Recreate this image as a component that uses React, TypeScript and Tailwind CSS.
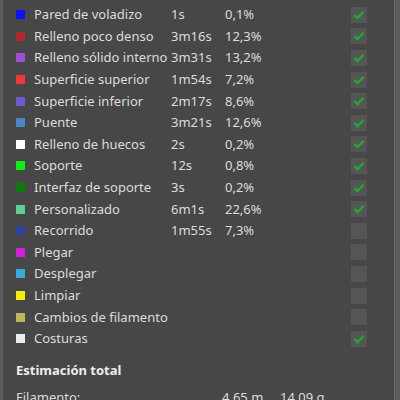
const rows: [string, string, string, string, boolean][] = [
  ['#1010ff', 'Pared de voladizo', '1s', '0,1%', true],
  ['#b02a2a', 'Relleno poco denso', '3m16s', '12,3%', true],
  ['#9b4fd6', 'Relleno sólido interno', '3m31s', '13,2%', true],
  ['#f03a3a', 'Superficie superior', '1m54s', '7,2%', true],
  ['#6c5ad0', 'Superficie inferior', '2m17s', '8,6%', true],
  ['#4a86c8', 'Puente', '3m21s', '12,6%', true],
  ['#ffffff', 'Relleno de huecos', '2s', '0,2%', true],
  ['#10f010', 'Soporte', '12s', '0,8%', true],
  ['#0a7a0a', 'Interfaz de soporte', '3s', '0,2%', true],
  ['#5fcf95', 'Personalizado', '6m1s', '22,6%', true],
  ['#2e40a0', 'Recorrido', '1m55s', '7,3%', false],
  ['#d020d8', 'Plegar', '', '', false],
  ['#3aa8d8', 'Desplegar', '', '', false],
  ['#f4f000', 'Limpiar', '', '', false],
  ['#c0b858', 'Cambios de filamento', '', '', false],
  ['#ececec', 'Costuras', '', '', true],
]

function Check({ on }: { on: boolean }) {
  return (
    <div className="w-[16px] h-[16px] bg-[#555555] flex items-center justify-center">
      {on && (
        <svg width="12" height="10" viewBox="0 0 12 10">
          <path d="M1.5 5.2 L4.6 8 L10.5 1.8" fill="none" stroke="#1fa83a" strokeWidth="2.4" />
        </svg>
      )}
    </div>
  )
}

export default function App() {
  return (
    <div
      className="w-[400px] h-[400px] overflow-hidden bg-[#5c5c5c] flex text-[13px] text-[#dcdcdc]"
      style={{ fontFamily: '"Noto Sans", "Open Sans", sans-serif' }}
    >
      <div className="ml-[3px] w-[392px] h-full bg-[#474747] border-r border-[#6a6a6a] flex flex-col">
        <div className="pt-[4px] flex flex-col">
          {rows.map(([c, label, t, p, on]) => (
            <div key={label} className="h-[21.6px] flex items-center">
              <div className="ml-[13px] w-[9px] h-[9px]" style={{ background: c }} />
              <span className="ml-[9px] w-[137px] whitespace-nowrap leading-none">{label}</span>
              <span className="w-[54px] leading-none">{t}</span>
              <span className="w-[126px] leading-none">{p}</span>
              <Check on={on} />
            </div>
          ))}
        </div>
        <div className="mt-[11px] h-[22px] flex items-center pl-[13px] font-bold text-[#eeeeee]">
          Estimación total
        </div>
        <div className="mt-[3px] h-[2px] bg-[#707070]" />
        <div className="pt-[5px] h-[24px] flex items-center">
          <span className="ml-[13px] w-[206px]">Filamento:</span>
          <span className="w-[58px]">4,65 m</span>
          <span>14,09 g</span>
        </div>
      </div>
    </div>
  )
}
